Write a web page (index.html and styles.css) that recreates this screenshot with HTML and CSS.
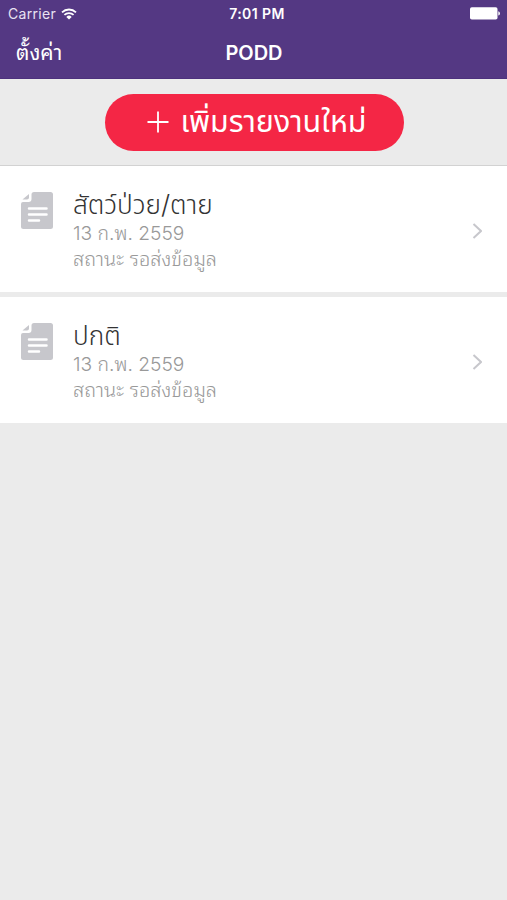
FILE: index.html
```html
<!DOCTYPE html>
<html lang="th">
  <head>
    <meta charset="utf-8">
    <title>PODD</title>
    <link rel="stylesheet" href="styles.css">
  </head>
  <body>
    <header class="header">
      <div class="status-bar">
        <div class="carrier">
          <span>Carrier</span>
          <svg class="wifi" viewBox="0 0 16 12" width="16" height="12">
            <path d="M1 4.3a10.2 10.2 0 0 1 14 0M3.4 6.9a6.7 6.7 0 0 1 9.2 0" fill="none" stroke="#fff" stroke-width="1.8" />
            <path d="M8 11.6 5.3 8.9a3.9 3.9 0 0 1 5.4 0z" fill="#fff" />
          </svg>
        </div>
        <span class="time">7:01 PM</span>
        <svg class="battery" viewBox="0 0 30 13" width="30" height="13">
          <rect x="0" y="0.3" width="27.5" height="12.2" rx="1.8" fill="#fff" />
          <path d="M28.3 4.2a2.3 2.3 0 0 1 0 4.4z" fill="#fff" />
        </svg>
      </div>
      <nav class="nav-bar">
        <a class="settings">ตั้งค่า</a>
        <h1 class="title">PODD</h1>
      </nav>
    </header>

    <div class="toolbar">
      <button class="add-button">
        <svg viewBox="0 0 22 22" width="22" height="22">
          <path d="M11 0.5v21M0.5 11h21" stroke="#fff" stroke-width="1.8" />
        </svg>
        <span class="add-label">เพิ่มรายงานใหม่</span>
      </button>
    </div>

    <ul class="reports">
      <li class="report">
        <svg class="doc-icon" viewBox="0 0 32 37" width="32" height="37">
          <path d="M13 0H29.500A2.500 2.500 0 0 1 32 2.500v32a2.500 2.500 0 0 1-2.500 2.500h-27A2.500 2.500 0 0 1 0 34.500V12a2 2 0 0 1 2-2h5.500a3 3 0 0 0 3-3V2.500A2.500 2.500 0 0 1 13 0z" fill="#c7c7cc" />
          <path d="M8 2v3.500a2 2 0 0 1-2 2H1.500z" fill="#c7c7cc" />
          <path d="M8 16.500h17.500M8 22.500h17.500M8 28.500h10" stroke="#fff" stroke-width="2.500" stroke-linecap="round" />
        </svg>
        <div class="report-info">
          <h2 class="name">สัตว์ป่วย/ตาย</h2>
          <p class="date">13 ก.พ. 2559</p>
          <p class="state">สถานะ รอส่งข้อมูล</p>
        </div>
        <svg class="chevron" viewBox="0 0 10 16" width="10" height="16">
          <path d="M1.500 1 9 8l-7.500 7" fill="none" stroke="#c7c7cc" stroke-width="2" />
        </svg>
      </li>
      <li class="report">
        <svg class="doc-icon" viewBox="0 0 32 37" width="32" height="37">
          <path d="M13 0H29.500A2.500 2.500 0 0 1 32 2.500v32a2.500 2.500 0 0 1-2.500 2.500h-27A2.500 2.500 0 0 1 0 34.500V12a2 2 0 0 1 2-2h5.500a3 3 0 0 0 3-3V2.500A2.500 2.500 0 0 1 13 0z" fill="#c7c7cc" />
          <path d="M8 2v3.500a2 2 0 0 1-2 2H1.500z" fill="#c7c7cc" />
          <path d="M8 16.500h17.500M8 22.500h17.500M8 28.500h10" stroke="#fff" stroke-width="2.500" stroke-linecap="round" />
        </svg>
        <div class="report-info">
          <h2 class="name">ปกติ</h2>
          <p class="date">13 ก.พ. 2559</p>
          <p class="state">สถานะ รอส่งข้อมูล</p>
        </div>
        <svg class="chevron" viewBox="0 0 10 16" width="10" height="16">
          <path d="M1.500 1 9 8l-7.500 7" fill="none" stroke="#c7c7cc" stroke-width="2" />
        </svg>
      </li>
    </ul>
  </body>
</html>
```
FILE: styles.css
```css
* {
  box-sizing: border-box;
}
body {
  margin: 0;
  min-height: 900px;
  background: #ebebeb;
  font-family: Inter, "Noto Sans Thai", "Noto Sans", sans-serif;
}
.header {
  height: 79px;
  background: #543883;
  border-bottom: 1px solid #4d317d;
  color: #fff;
}
.status-bar {
  display: grid;
  grid-template-columns: 1fr auto 1fr;
  align-items: center;
  height: 27px;
  padding: 0 7px 0 8px;
  font-size: 14px;
}
.carrier {
  display: flex;
  align-items: center;
  gap: 5px;
  color: #e9e2f2;
  letter-spacing: 0.3px;
}
.time {
  padding-left: 6px;
  font-size: 14px;
  font-weight: 600;
  letter-spacing: 0.4px;
}
.battery {
  justify-self: end;
}
.nav-bar {
  display: grid;
  grid-template-columns: 1fr auto 1fr;
  align-items: center;
  height: 51px;
  padding: 0 16px;
}
.settings {
  padding-bottom: 5px;
  font-family: Inter, "Noto Sans Thai Looped", "Noto Sans Thai", sans-serif;
  font-size: 21px;
}
.title {
  margin: 0;
  padding-left: 1px;
  font-size: 20px;
  font-weight: 600;
}
.toolbar {
  display: flex;
  justify-content: center;
  height: 87px;
  padding: 15px 0 0 1px;
  border-bottom: 1px solid #d2d2d2;
}
.add-button {
  display: flex;
  align-items: center;
  gap: 12px;
  width: 299px;
  height: 57px;
  padding: 0 0 1px 42px;
  border: none;
  border-radius: 29px;
  background: #f42645;
  color: #fff;
  font-family: inherit;
  font-size: 30.400px;
  white-space: nowrap;
}
.add-label {
  padding-top: 2px;
}
.reports {
  display: flex;
  flex-direction: column;
  gap: 5px;
  margin: 0;
  padding: 0;
  list-style: none;
}
.report {
  display: flex;
  align-items: flex-start;
  height: 126px;
  padding: 26px 25px 0 21px;
  background: #fff;
  white-space: nowrap;
}
.report-info {
  flex: 1;
  margin-left: 20px;
}
.name {
  margin: 0;
  color: #333;
  font-size: 26.200px;
  font-weight: 350;
  line-height: 25px;
}
.date,
.state {
  margin: 0;
  color: #999;
  font-family: Inter, "Noto Sans Thai Looped", "Noto Sans Thai", sans-serif;
  font-size: 19.200px;
  font-weight: 300;
  line-height: 26px;
}
.date {
  padding-top: 3px;
}
.state {
  font-size: 20px;
}
.chevron {
  margin-top: 31px;
}
```
